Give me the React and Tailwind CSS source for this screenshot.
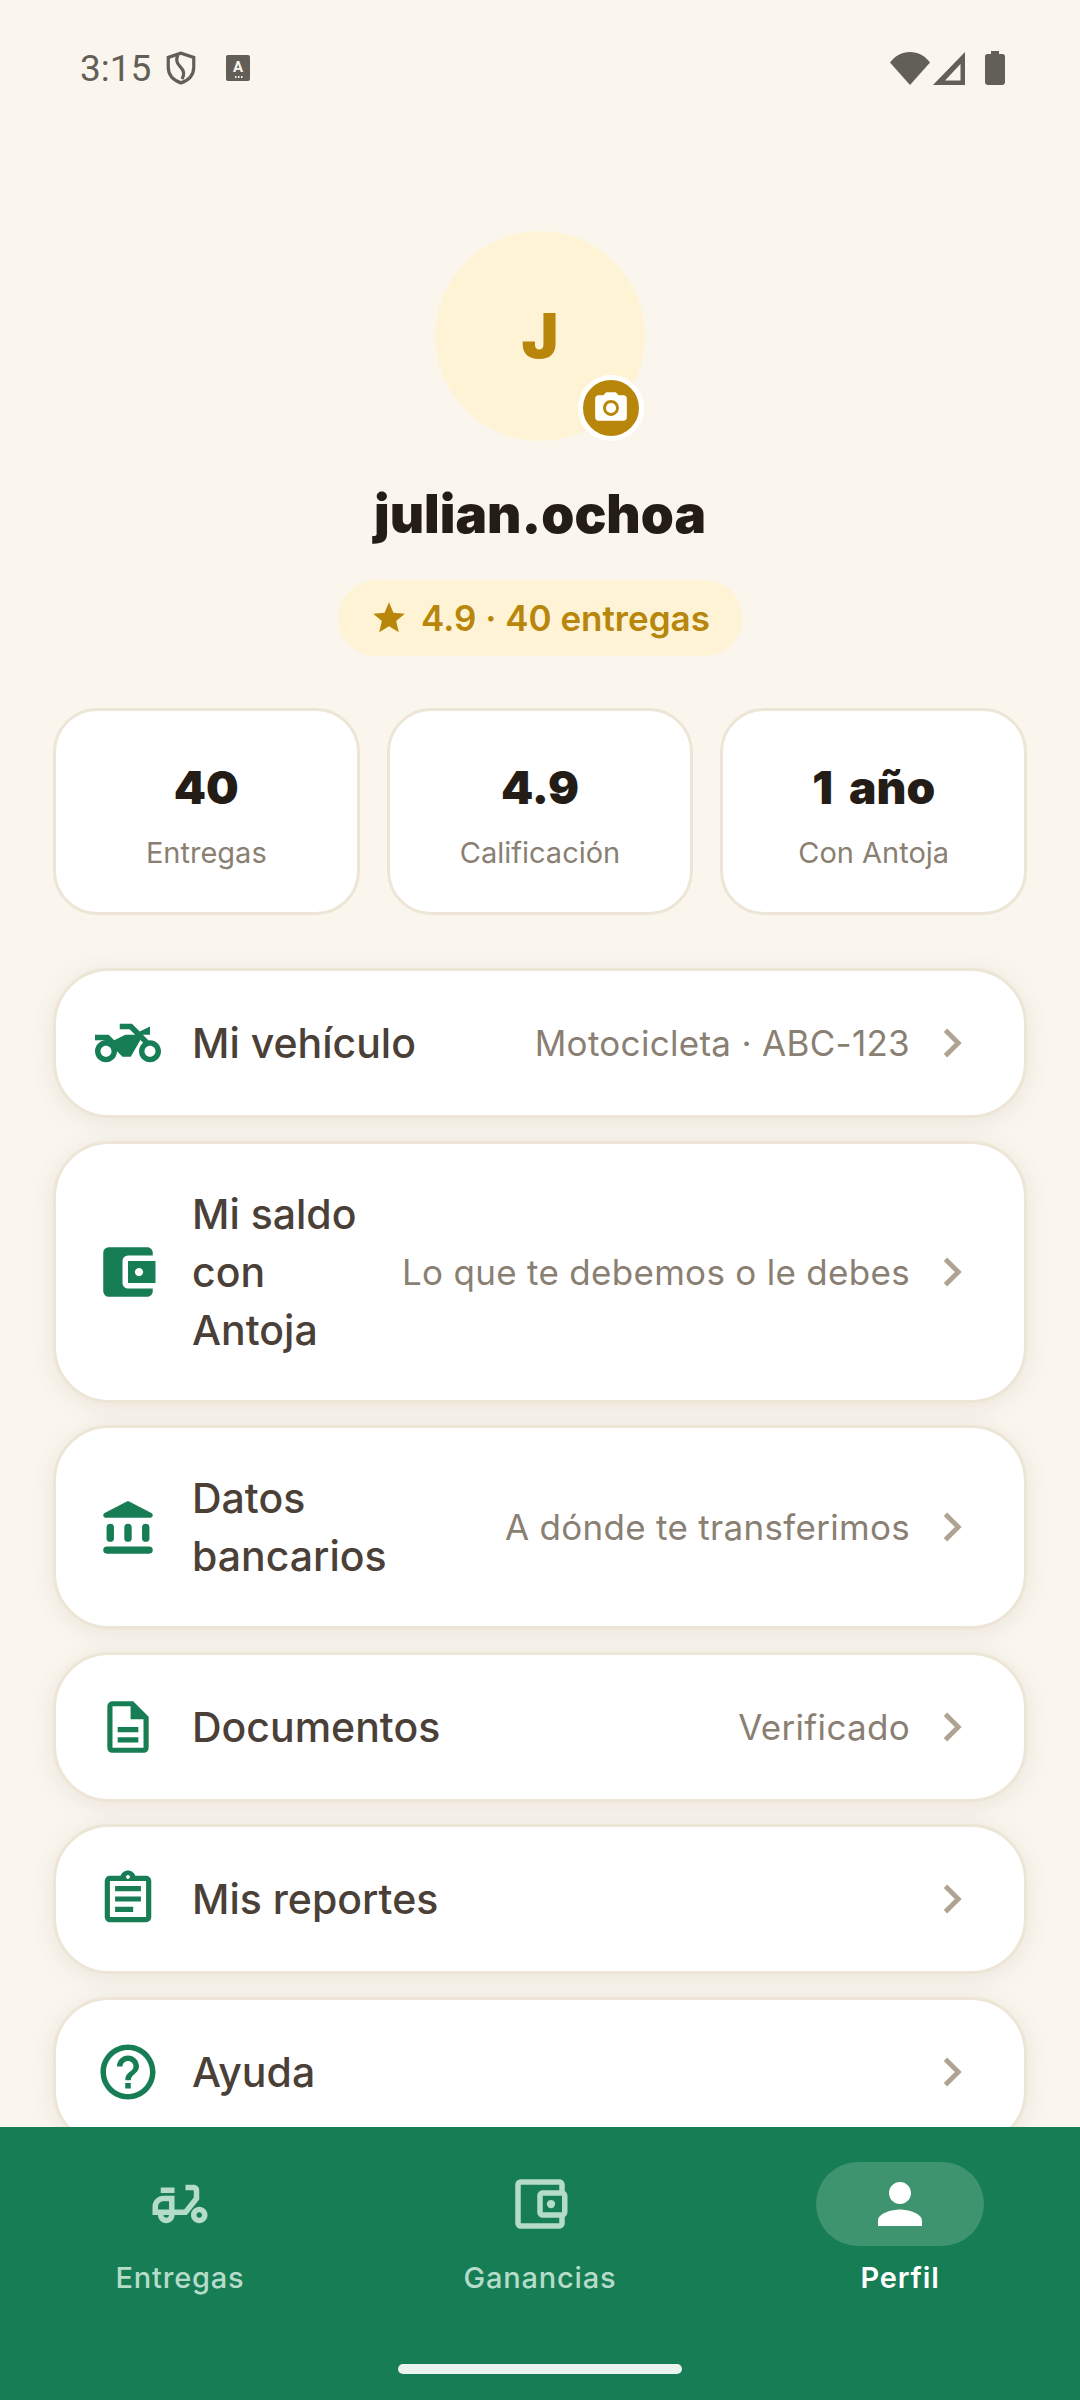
import React from "react";
import {
  MdTwoWheeler,
  MdAccountBalanceWallet,
  MdOutlineDescription,
  MdOutlineAssignment,
  MdHelpOutline,
  MdChevronRight,
  MdStar,
  MdPhotoCamera,
  MdPerson,
  MdOutlineMoped,
  MdOutlineAccountBalanceWallet,
} from "react-icons/md";

const BankIcon = ({ size = 66 }) => (
  <svg width={size} height={size} viewBox="0 0 24 24" fill="currentColor">
    <path d="M11.4 2.8 3.5 6.9c-.3.16-.5.48-.5.82C3 8.2 3.4 8.6 3.88 8.6h16.24c.48 0 .88-.4.88-.88 0-.34-.2-.66-.5-.82l-7.9-4.1c-.38-.2-.82-.2-1.2 0z" />
    <rect x="4.2" y="10.8" width="2.7" height="6.6" rx="1.35" />
    <rect x="10.65" y="10.8" width="2.7" height="6.6" rx="1.35" />
    <rect x="17.1" y="10.8" width="2.7" height="6.6" rx="1.35" />
    <rect x="3" y="19.1" width="18" height="2.6" rx="1.3" />
  </svg>
);

const stats = [
  { value: "40", label: "Entregas" },
  { value: "4.9", label: "Calificación" },
  { value: "1 año", label: "Con Antoja" },
];

const rows = [
  { icon: <MdTwoWheeler size={66} />, title: "Mi vehículo", detail: "Motocicleta · ABC-123" },
  { icon: <MdAccountBalanceWallet size={66} />, title: "Mi saldo con Antoja", detail: "Lo que te debemos o le debes", titleClass: "w-[180px]" },
  { icon: <BankIcon />, title: "Datos bancarios", detail: "A dónde te transferimos", titleClass: "w-[200px]" },
  { icon: <MdOutlineDescription size={62} />, title: "Documentos", detail: "Verificado" },
  { icon: <MdOutlineAssignment size={62} />, title: "Mis reportes" },
  { icon: <MdHelpOutline size={66} />, title: "Ayuda" },
];

const tabs = [
  { icon: <MdOutlineMoped size={66} />, label: "Entregas" },
  { icon: <MdOutlineAccountBalanceWallet size={66} />, label: "Ganancias" },
  { icon: <MdPerson size={66} />, label: "Perfil", active: true },
];

function StatusBar() {
  return (
    <div className="flex h-[136px] shrink-0 items-center justify-between pl-[80px] pr-[75px] text-[#625e58]">
      <div className="flex items-center">
        <span className="font-['Roboto',sans-serif] text-[37px] leading-none">3:15</span>
        <svg className="ml-[15px]" width="30" height="34" viewBox="0 0 28 32" fill="none" stroke="currentColor" strokeWidth="3">
          <path d="M14 2 2 6v9c0 7.500 5 12.600 12 15 7-2.400 12-7.500 12-15V6z" />
          <path d="M11 4c-2 4-1.500 7 2 10.500 4 4 4.500 7 2 12" />
        </svg>
        <svg className="ml-[30px]" width="24" height="26" viewBox="0 0 24 26">
          <rect width="24" height="26" rx="2" fill="currentColor" />
          <text x="12" y="17" textAnchor="middle" fontSize="15" fontWeight="700" fontFamily="Roboto, sans-serif" fill="#faf6ee">A</text>
          <path d="M14 22h1.500M17 22h1.500M20 22h1.500" stroke="#faf6ee" strokeWidth="2" transform="translate(-5 0)" />
        </svg>
      </div>
      <div className="flex items-center">
        <svg width="40" height="33" viewBox="0 0 40 33" fill="currentColor">
          <path d="M0 10.500C5 4 12 0 20 0s15 4 20 10.500L20 33z" />
        </svg>
        <svg className="ml-[3px]" width="33" height="33" viewBox="0 0 33 33">
          <path fillRule="evenodd" d="M32 0v33H0zM27.500 12 12 28.500h15.500z" fill="currentColor" />
        </svg>
        <svg className="ml-[19px]" width="20" height="34" viewBox="0 0 20 34" fill="currentColor">
          <path d="M6 0h8v3h3.500C19 3 20 4 20 5.500V31c0 1.700-1.300 3-3 3H3c-1.700 0-3-1.300-3-3V5.500C0 4 1 3 2.500 3H6z" />
        </svg>
      </div>
    </div>
  );
}

function MenuRow({ icon, title, detail, titleClass }) {
  return (
    <div className="flex min-h-[150px] shrink-0 items-center rounded-[56px] border-[3px] border-[#ede5d6] bg-white py-[41px] pl-[39px] pr-[43px] shadow-[0_4px_24px_rgba(90,60,30,0.09)]">
      <div className="flex h-[58px] w-[66px] shrink-0 items-center justify-center text-[#177d55]">{icon}</div>
      <div className={`ml-[31px] shrink-0 text-[41px] font-medium leading-[58px] text-[#4a4038] ${titleClass || ""}`}>{title}</div>
      <div className="ml-auto text-right text-[35px] leading-[48px] tracking-[0.3px] text-[#8a7f73]">{detail}</div>
      <MdChevronRight size={58} className="ml-[13px] shrink-0 text-[#b0a392]" />
    </div>
  );
}

export default function App() {
  return (
    <div className="flex h-[2400px] w-[1080px] flex-col overflow-hidden bg-[#faf6ee] font-['Inter',sans-serif]">
      <StatusBar />

      <main className="flex min-h-0 flex-1 flex-col overflow-hidden px-[53px] pt-[95px]">
        {/* Avatar, name and rating */}
        <div className="flex flex-col items-center">
          <div className="relative flex h-[210px] w-[210px] items-center justify-center rounded-full bg-[#fff3d6]">
            <span className="text-[62px] font-black leading-none text-[#b8860b]">J</span>
            <div className="absolute bottom-0 right-[1px] flex h-[66px] w-[66px] items-center justify-center rounded-full border-[5px] border-white bg-[#b8860b] text-white">
              <MdPhotoCamera size={38} />
            </div>
          </div>
          <div className="mt-[35px] text-[53px] font-black leading-[76px] text-[#241c16]">julian.ochoa</div>
          <div className="mt-[28px] flex h-[76px] w-[405px] items-center justify-center gap-[13px] rounded-full bg-[#fff3d6] text-[35px] font-semibold text-[#b8860b]">
            <MdStar size={38} />
            <span>4.9 · 40 entregas</span>
          </div>
        </div>

        {/* Stat cards */}
        <div className="mt-[52px] grid shrink-0 grid-cols-3 gap-[27px]">
          {stats.map((s) => (
            <div key={s.label} className="flex h-[207px] flex-col items-center justify-center gap-[17px] rounded-[44px] border-[3px] border-[#ede5d6] bg-white pt-[8px]">
              <div className="text-[46px] font-black leading-[58px] text-[#241c16] [word-spacing:7px]">{s.value}</div>
              <div className="text-[29px] leading-[40px] text-[#8a7f73]">{s.label}</div>
            </div>
          ))}
        </div>

        {/* Menu */}
        <div className="mt-[53px] flex flex-col gap-[22.5px]">
          {rows.map((r) => (
            <MenuRow key={r.title} {...r} />
          ))}
        </div>
      </main>

      {/* Bottom navigation */}
      <nav className="relative h-[273px] shrink-0 bg-[#177d55]">
        <div className="grid grid-cols-3 pt-[35px]">
          {tabs.map((t) => (
            <div key={t.label} className="flex flex-col items-center">
              <div className={`flex h-[84px] w-[168px] items-center justify-center rounded-full ${t.active ? "bg-[#3f9470] text-white" : "text-[#b5dcc9]"}`}>
                {t.icon}
              </div>
              <div className={`mt-[12px] text-[29px] font-medium leading-[40px] tracking-[0.8px] ${t.active ? "font-semibold text-white" : "text-[#b5dcc9]"}`}>{t.label}</div>
            </div>
          ))}
        </div>
        <div className="absolute bottom-[26px] left-[398px] h-[10px] w-[284px] rounded-full bg-[#eaf3ee]" />
      </nav>
    </div>
  );
}
